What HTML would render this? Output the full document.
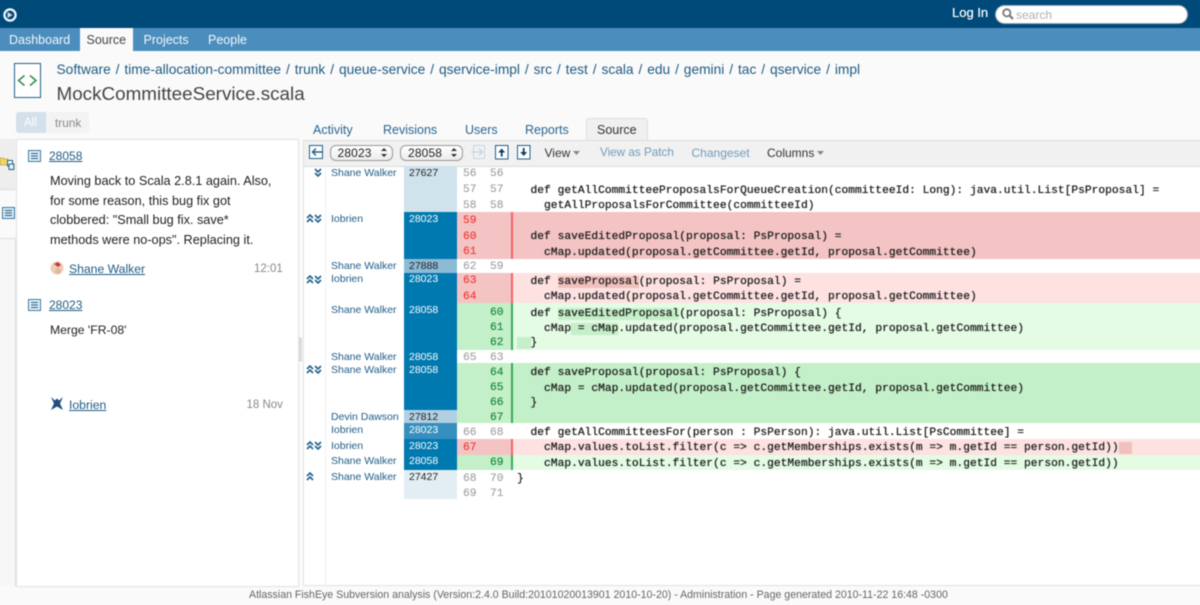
<!DOCTYPE html>
<html><head><meta charset="utf-8"><style>
html,body{margin:0;padding:0;width:1200px;height:605px;overflow:hidden;background:#fafafa}
#p{position:relative;width:1200px;height:605px;font-family:"Liberation Sans",sans-serif;filter:blur(.45px)}
.a,.t,.c,.n,.r,.u{position:absolute;white-space:pre}
.t{line-height:16px;height:16px}
.c{left:517px;font:11.27px/15px "Liberation Mono",monospace;color:#1a1a1a;height:15px;text-shadow:0 0 .6px #333}
.c b{font-weight:normal}
.n{font:11.27px/15px "Liberation Mono",monospace;height:15px;color:#a4a4a4;text-shadow:0 0 .4px #aaa}
.n.rd{color:#f03c3c;text-shadow:0 0 .4px #f03c3c}.n.gr{color:#1c8a3c;text-shadow:0 0 .4px #1c8a3c}
.u{left:331px;font-size:10.5px;line-height:14px;color:#1f5c86}
.r{left:409px;font-size:10.5px;line-height:14px;color:#fff}
.r.k{color:#222}
.bc{top:62px;font-size:13.75px;color:#205c85;word-spacing:1.1px;width:806px;overflow:hidden}
.tab{top:122px;font-size:12.5px;color:#2a6590}
.ml{left:50px;font-size:12.7px;color:#222}
a{color:#205c85;text-decoration:underline}
.hr{background:#f0c0bc}.hg{background:#c4efc8}
svg{position:absolute;overflow:visible}
</style></head><body><div id="p">
<div class="a" style="left:-4px;top:-4px;width:1208px;height:32px;background:#004a7a"></div>
<div class="a" style="left:-4px;top:28px;width:1208px;height:23px;background:#4b8dbd"></div>
<div class="a" style="left:80px;top:28px;width:53px;height:24px;background:#fafafa"></div>
<svg style="left:3px;top:8px" width="14" height="14" viewBox="0 0 14 14"><circle cx="7" cy="7" r="5.600" fill="none" stroke="#f4f8fb" stroke-width="2.200"/><path d="M4.500 4l5 3-5 3z" fill="#cfdde8"/></svg>
<div class="t" style="left:952px;top:5px;color:#fff;font-size:13px;text-shadow:0 0 .5px #fff">Log In</div>
<div class="a" style="left:996px;top:6px;width:191px;height:17px;border-radius:9px;background:#fff;box-shadow:0 0 0 1px #9ab"></div>
<svg style="left:1002px;top:8px" width="12" height="12" viewBox="0 0 12 12"><circle cx="4.800" cy="4.800" r="3.600" fill="none" stroke="#777" stroke-width="1.800"/><path d="M7.400 7.400l3.600 3.600" stroke="#777" stroke-width="2.200"/></svg>
<div class="t" style="left:1016px;top:7px;color:#b0b0b0;font-size:12px">search</div>
<div class="t" style="left:9px;top:32px;color:#f4f8fb;font-size:12.5px">Dashboard</div>
<div class="t" style="left:86.500px;top:32px;color:#444;font-size:12.5px">Source</div>
<div class="t" style="left:143.500px;top:32px;color:#f4f8fb;font-size:12.5px">Projects</div>
<div class="t" style="left:208px;top:32px;color:#f4f8fb;font-size:12.5px">People</div>

<div class="a" style="left:14px;top:63px;width:25px;height:33px;border:1px solid #20608c;background:#fff"></div>
<svg style="left:15px;top:64px" width="25" height="33" viewBox="0 0 25 33"><path d="M9.500 11.500L3.500 16.500L9.500 21.500" fill="none" stroke="#2e8b48" stroke-width="1.500"/><path d="M15 11.500L21 16.500L15 21.500" fill="none" stroke="#2e8b48" stroke-width="1.500"/></svg>
<div class="t bc" style="left:56.500px">Software / time-allocation-committee / trunk / queue-service / qservice-impl / src / test / scala / edu / gemini / tac / qservice / impl</div>
<div class="t" style="left:56.500px;top:83px;font-size:18.850px;line-height:21px;height:21px;color:#444">MockCommitteeService.scala</div>

<div class="a" style="left:16px;top:112px;width:73px;height:21px;background:#f3f3f3;border-radius:3px"></div>
<div class="a" style="left:16px;top:112px;width:30px;height:21px;background:#d4e0ea;border-radius:3px 0 0 3px"></div>
<div class="t" style="left:24px;top:115px;font-size:11.5px;color:#fff">All</div>
<div class="t" style="left:55px;top:115px;font-size:11.8px;color:#888">trunk</div>

<div class="t tab" style="left:313px">Activity</div>
<div class="t tab" style="left:383px">Revisions</div>
<div class="t tab" style="left:465px">Users</div>
<div class="t tab" style="left:525px">Reports</div>
<div class="a" style="left:586px;top:118px;width:60px;height:23px;background:#f0f0f0;border:1px solid #ddd;border-bottom:0;border-radius:3px 3px 0 0"></div>
<div class="t" style="left:597px;top:122px;font-size:12.5px;color:#333">Source</div>

<!-- left rail -->
<div class="a" style="left:-4px;top:139px;width:20px;height:50px;background:#eee;border-bottom:1px solid #ddd"></div>
<div class="a" style="left:-4px;top:238px;width:20px;height:348px;background:#f7f7f7;border-top:1px solid #ddd;border-right:1px solid #ddd;box-sizing:border-box"></div>
<svg style="left:0;top:157px" width="15" height="16" viewBox="0 0 15 16"><path d="M0 1h3l1 1h4v6H0z" fill="#f0d860" stroke="#9a8a30" stroke-width=".6"/><rect x="7.500" y="3.500" width="5" height="5.500" fill="#fff" stroke="#20608c"/><rect x="9" y="7" width="4.800" height="5.500" fill="#eaf2f8" stroke="#20608c"/></svg>
<svg style="left:2px;top:207px" width="13" height="12" viewBox="0 0 13 12"><rect x=".5" y=".5" width="12" height="11" fill="#dce9f2" stroke="#3a7aa6"/><path d="M3 3.500h7M3 6h7M3 8.500h7" stroke="#205c85"/></svg>

<div class="a" style="left:16px;top:139px;width:281px;height:446px;background:#fff;border:1px solid #e2e2e2"></div>
<svg style="left:28px;top:150px" width="13" height="12" viewBox="0 0 13 12"><rect x=".5" y=".5" width="12" height="11" fill="#e6f0f6" stroke="#3a7aa6"/><path d="M3 3.500h7M3 6h7M3 8.500h7" stroke="#205c85"/></svg>
<div class="t" style="left:49px;top:148px;font-size:12px"><a>28058</a></div>
<div class="t ml" style="top:173px">Moving back to Scala 2.8.1 again. Also,</div>
<div class="t ml" style="top:192.500px">for some reason, this bug fix got</div>
<div class="t ml" style="top:212px">clobbered: "Small bug fix. save*</div>
<div class="t ml" style="top:231.500px">methods were no-ops". Replacing it.</div>
<svg style="left:50px;top:260px" width="15" height="16" viewBox="0 0 15 16"><circle cx="7" cy="8" r="6.500" fill="#f0cdb8"/><path d="M4 4l4-2 3 3-3 2z" fill="#c04030"/><circle cx="8" cy="11" r="3" fill="#e3b8a0"/></svg>
<div class="t" style="left:69px;top:261px;font-size:12.2px"><a>Shane Walker</a></div>
<div class="t" style="left:254px;top:261px;font-size:11.5px;color:#888">12:01</div>
<svg style="left:28px;top:299px" width="13" height="12" viewBox="0 0 13 12"><rect x=".5" y=".5" width="12" height="11" fill="#e6f0f6" stroke="#3a7aa6"/><path d="M3 3.500h7M3 6h7M3 8.500h7" stroke="#205c85"/></svg>
<div class="t" style="left:49px;top:297px;font-size:12px"><a>28023</a></div>
<div class="t" style="left:50px;top:322px;font-size:12.2px;color:#222">Merge 'FR-08'</div>
<svg style="left:50px;top:397px" width="14" height="14" viewBox="0 0 14 14"><path d="M1 0L5 3.500L7 1.500L9 3.500L13 0L10 6.500L13 13L7 9.500L1 13L4 6.500z" fill="#1f4e7c"/></svg>
<div class="t" style="left:69px;top:397px;font-size:12.2px"><a>Iobrien</a></div>
<div class="t" style="left:246.500px;top:397px;font-size:11.5px;color:#888">18 Nov</div>
<div class="a" style="left:299px;top:338px;width:3px;height:24px;background:repeating-linear-gradient(#bbb 0 1px,transparent 1px 2px)"></div>

<!-- right panel -->
<div class="a" style="left:303px;top:140px;width:901px;height:445px;background:#fff;border-left:1px solid #e2e2e2;border-bottom:1px solid #e2e2e2"></div>
<div class="a" style="left:304px;top:140px;width:900px;height:25px;background:#f1f1f1;border-top:1px solid #ddd;border-bottom:1px solid #ddd"></div>
<div class="a" style="left:325px;top:166px;width:1px;height:419px;background:#f2f2f2"></div>

<svg style="left:309px;top:145px" width="15" height="15" viewBox="0 0 15 15"><rect x=".5" y=".5" width="13" height="13" fill="#fff" stroke="#20608c"/><path d="M3 7h11M7 3.500L3.500 7L7 10.500" fill="none" stroke="#20608c" stroke-width="1.400"/></svg>
<div class="a" style="left:330px;top:145px;width:61px;height:14px;border:1px solid #999;border-radius:6px;background:linear-gradient(#fff,#ececec)"></div>
<div class="t" style="left:337.500px;top:145px;font-size:12px;color:#222;letter-spacing:.15px">28023</div>
<div class="a" style="left:400px;top:145px;width:61px;height:14px;border:1px solid #999;border-radius:6px;background:linear-gradient(#fff,#ececec)"></div>
<div class="t" style="left:408px;top:145px;font-size:12px;color:#222;letter-spacing:.15px">28058</div>
<svg style="left:380px;top:147px" width="8" height="11" viewBox="0 0 8 11"><path d="M1 4l3-3 3 3zM1 7l3 3 3-3z" fill="#333"/></svg>
<svg style="left:450px;top:147px" width="8" height="11" viewBox="0 0 8 11"><path d="M1 4l3-3 3 3zM1 7l3 3 3-3z" fill="#333"/></svg>
<svg style="left:471px;top:145px" width="15" height="15" viewBox="0 0 15 15"><rect x="2.500" y=".5" width="11" height="13" fill="none" stroke="#c4d6e2"/><path d="M0 7h11M8 3.500L11.500 7L8 10.500" fill="none" stroke="#c4d6e2" stroke-width="1.300"/></svg>
<svg style="left:495px;top:145px" width="14" height="15" viewBox="0 0 14 15"><rect x=".5" y=".5" width="12.500" height="13.500" fill="#fff" stroke="#20608c"/><path d="M6.700 6v5.500" stroke="#123f64" stroke-width="1.800"/><path d="M3.200 7.500l3.500-4 3.500 4z" fill="#123f64"/></svg>
<svg style="left:517px;top:145px" width="14" height="15" viewBox="0 0 14 15"><rect x=".5" y=".5" width="12.500" height="13.500" fill="#fff" stroke="#20608c"/><path d="M6.700 3v5.500" stroke="#123f64" stroke-width="1.800"/><path d="M3.200 7l3.500 4 3.500-4z" fill="#123f64"/></svg>
<div class="t" style="left:544.500px;top:145px;font-size:12px;color:#333">View</div>
<svg style="left:573px;top:151px" width="8" height="5"><path d="M0 0h7L3.500 4z" fill="#888"/></svg>
<div class="t" style="left:600px;top:145px;font-size:11.7px;color:#6f9cbd">View as Patch</div>
<div class="t" style="left:691.500px;top:145px;font-size:12px;color:#6f9cbd">Changeset</div>
<div class="t" style="left:767px;top:145px;font-size:12px;color:#333">Columns</div>
<svg style="left:817px;top:151px" width="8" height="5"><path d="M0 0h7L3.500 4z" fill="#888"/></svg>

<!-- bands -->
<div class="a" style="left:457px;top:212px;width:747px;height:47px;background:#f4c4c4"></div>
<div class="a" style="left:457px;top:273px;width:55px;height:30px;background:#f4c4c4"></div>
<div class="a" style="left:512px;top:273px;width:692px;height:30px;background:#fee1e1"></div>
<div class="a" style="left:457px;top:303px;width:55px;height:47px;background:#c3f0c8"></div>
<div class="a" style="left:512px;top:303px;width:692px;height:47px;background:#e4fbe4"></div>
<div class="a" style="left:457px;top:363px;width:747px;height:60px;background:#c3f0c8"></div>
<div class="a" style="left:457px;top:439px;width:55px;height:16px;background:#f4c4c4"></div>
<div class="a" style="left:512px;top:439px;width:692px;height:16px;background:#fee1e1"></div>
<div class="a" style="left:457px;top:455px;width:55px;height:15px;background:#c3f0c8"></div>
<div class="a" style="left:512px;top:455px;width:692px;height:15px;background:#e4fbe4"></div>
<div class="a" style="left:511px;top:212px;width:1.500px;height:47px;background:#f56464"></div>
<div class="a" style="left:511px;top:273px;width:1.500px;height:30px;background:#f56464"></div>
<div class="a" style="left:511px;top:303px;width:1.500px;height:47px;background:#3aa85c"></div>
<div class="a" style="left:511px;top:363px;width:1.500px;height:60px;background:#3aa85c"></div>
<div class="a" style="left:511px;top:439px;width:1.500px;height:16px;background:#f56464"></div>
<div class="a" style="left:511px;top:455px;width:1.500px;height:15px;background:#3aa85c"></div>

<!-- revisions -->
<div class="a" style="left:404px;top:166px;width:53px;height:46px;background:#cfe3ed"></div>
<div class="a" style="left:404px;top:212px;width:53px;height:47px;background:#0079b0"></div>
<div class="a" style="left:404px;top:259px;width:53px;height:14px;background:#8dbbd5"></div>
<div class="a" style="left:404px;top:273px;width:53px;height:137px;background:#0079b0"></div>
<div class="a" style="left:404px;top:410px;width:53px;height:13px;background:#b2d0e3"></div>
<div class="a" style="left:404px;top:423px;width:53px;height:16px;background:#368fbe"></div>
<div class="a" style="left:404px;top:439px;width:53px;height:31px;background:#0079b0"></div>
<div class="a" style="left:404px;top:470px;width:53px;height:29px;background:#e2eef4"></div>

<div class="r k" style="top:166px">27627</div><div class="u" style="top:166px">Shane Walker</div>
<div class="r" style="top:212px">28023</div><div class="u" style="top:212px">Iobrien</div>
<div class="r k" style="top:259px">27888</div><div class="u" style="top:259px">Shane Walker</div>
<div class="r" style="top:272px">28023</div><div class="u" style="top:272px">Iobrien</div>
<div class="r" style="top:303px">28058</div><div class="u" style="top:303px">Shane Walker</div>
<div class="r" style="top:350px">28058</div><div class="u" style="top:350px">Shane Walker</div>
<div class="r" style="top:363px">28058</div><div class="u" style="top:363px">Shane Walker</div>
<div class="r k" style="top:410px">27812</div><div class="u" style="top:410px">Devin Dawson</div>
<div class="r" style="top:423px">28023</div><div class="u" style="top:423px">Iobrien</div>
<div class="r" style="top:439px">28023</div><div class="u" style="top:439px">Iobrien</div>
<div class="r" style="top:454px">28058</div><div class="u" style="top:454px">Shane Walker</div>
<div class="r k" style="top:470px">27427</div><div class="u" style="top:470px">Shane Walker</div>

<!-- chevrons -->
<svg style="left:314px;top:168px" width="8" height="9" viewBox="0 0 8 9"><path d="M1 1l3 3 3-3M1 5l3 3 3-3" fill="none" stroke="#20608c" stroke-width="1.600"/></svg>
<svg style="left:306px;top:214px" width="8" height="9" viewBox="0 0 8 9"><path d="M1 4l3-3 3 3M1 8l3-3 3 3" fill="none" stroke="#20608c" stroke-width="1.600"/></svg>
<svg style="left:314px;top:214px" width="8" height="9" viewBox="0 0 8 9"><path d="M1 1l3 3 3-3M1 5l3 3 3-3" fill="none" stroke="#20608c" stroke-width="1.600"/></svg>
<svg style="left:306px;top:275px" width="8" height="9" viewBox="0 0 8 9"><path d="M1 4l3-3 3 3M1 8l3-3 3 3" fill="none" stroke="#20608c" stroke-width="1.600"/></svg>
<svg style="left:314px;top:275px" width="8" height="9" viewBox="0 0 8 9"><path d="M1 1l3 3 3-3M1 5l3 3 3-3" fill="none" stroke="#20608c" stroke-width="1.600"/></svg>
<svg style="left:306px;top:365px" width="8" height="9" viewBox="0 0 8 9"><path d="M1 4l3-3 3 3M1 8l3-3 3 3" fill="none" stroke="#20608c" stroke-width="1.600"/></svg>
<svg style="left:314px;top:365px" width="8" height="9" viewBox="0 0 8 9"><path d="M1 1l3 3 3-3M1 5l3 3 3-3" fill="none" stroke="#20608c" stroke-width="1.600"/></svg>
<svg style="left:306px;top:441px" width="8" height="9" viewBox="0 0 8 9"><path d="M1 4l3-3 3 3M1 8l3-3 3 3" fill="none" stroke="#20608c" stroke-width="1.600"/></svg>
<svg style="left:314px;top:441px" width="8" height="9" viewBox="0 0 8 9"><path d="M1 1l3 3 3-3M1 5l3 3 3-3" fill="none" stroke="#20608c" stroke-width="1.600"/></svg>
<svg style="left:306px;top:472px" width="8" height="9" viewBox="0 0 8 9"><path d="M1 4l3-3 3 3M1 8l3-3 3 3" fill="none" stroke="#20608c" stroke-width="1.600"/></svg>

<!-- line numbers -->
<div class="n" style="left:463px;top:167px">56</div><div class="n" style="left:490px;top:167px">56</div>
<div class="n" style="left:463px;top:183px">57</div><div class="n" style="left:490px;top:183px">57</div>
<div class="n" style="left:463px;top:199px">58</div><div class="n" style="left:490px;top:199px">58</div>
<div class="n rd" style="left:463px;top:214px">59</div>
<div class="n rd" style="left:463px;top:230px">60</div>
<div class="n rd" style="left:463px;top:245px">61</div>
<div class="n" style="left:463px;top:260px">62</div><div class="n" style="left:490px;top:260px">59</div>
<div class="n rd" style="left:463px;top:274px">63</div>
<div class="n rd" style="left:463px;top:290px">64</div>
<div class="n gr" style="left:490px;top:306px">60</div>
<div class="n gr" style="left:490px;top:321px">61</div>
<div class="n gr" style="left:490px;top:336px">62</div>
<div class="n" style="left:463px;top:351px">65</div><div class="n" style="left:490px;top:351px">63</div>
<div class="n gr" style="left:490px;top:366px">64</div>
<div class="n gr" style="left:490px;top:381px">65</div>
<div class="n gr" style="left:490px;top:396px">66</div>
<div class="n gr" style="left:490px;top:411px">67</div>
<div class="n" style="left:463px;top:426px">66</div><div class="n" style="left:490px;top:426px">68</div>
<div class="n rd" style="left:463px;top:441px">67</div>
<div class="n gr" style="left:490px;top:456px">69</div>
<div class="n" style="left:463px;top:472px">68</div><div class="n" style="left:490px;top:472px">70</div>
<div class="n" style="left:463px;top:487px">69</div><div class="n" style="left:490px;top:487px">71</div>

<!-- code -->
<div class="c" style="top:184px">  def getAllCommitteeProposalsForQueueCreation(committeeId: Long): java.util.List[PsProposal] =</div>
<div class="c" style="top:199px">    getAllProposalsForCommittee(committeeId)</div>
<div class="c" style="top:230px">  def saveEditedProposal(proposal: PsProposal) =</div>
<div class="c" style="top:246px">    cMap.updated(proposal.getCommittee.getId, proposal.getCommittee)</div>
<div class="c" style="top:275px">  def <b class="hr">saveProposal</b>(proposal: PsProposal) =</div>
<div class="c" style="top:290px">    cMap.updated(proposal.getCommittee.getId, proposal.getCommittee)</div>
<div class="c" style="top:307px">  def <b class="hg">saveEditedProposal</b>(proposal: PsProposal) {</div>
<div class="c" style="top:322px">    cMap<b class="hg"> = cMap</b>.updated(proposal.getCommittee.getId, proposal.getCommittee)</div>
<div class="c" style="top:336px"><b class="hg">  </b>}</div>
<div class="c" style="top:366px">  def saveProposal(proposal: PsProposal) {</div>
<div class="c" style="top:382px">    cMap = cMap.updated(proposal.getCommittee.getId, proposal.getCommittee)</div>
<div class="c" style="top:396px">  }</div>
<div class="c" style="top:426px">  def getAllCommitteesFor(person : PsPerson): java.util.List[PsCommittee] =</div>
<div class="c" style="top:441px">    cMap.values.toList.filter(c =&gt; c.getMemberships.exists(m =&gt; m.getId == person.getId))<b class="hr">  </b></div>
<div class="c" style="top:457px">    cMap.values.toList.filter(c =&gt; c.getMemberships.exists(m =&gt; m.getId == person.getId))</div>
<div class="c" style="top:472px">}</div>

<div class="t" style="left:249px;top:587px;font-size:10.6px;color:#666">Atlassian FishEye Subversion analysis (Version:2.4.0 Build:20101020013901 2010-10-20) - Administration - Page generated 2010-11-22 16:48 -0300</div>
</div></body></html>
